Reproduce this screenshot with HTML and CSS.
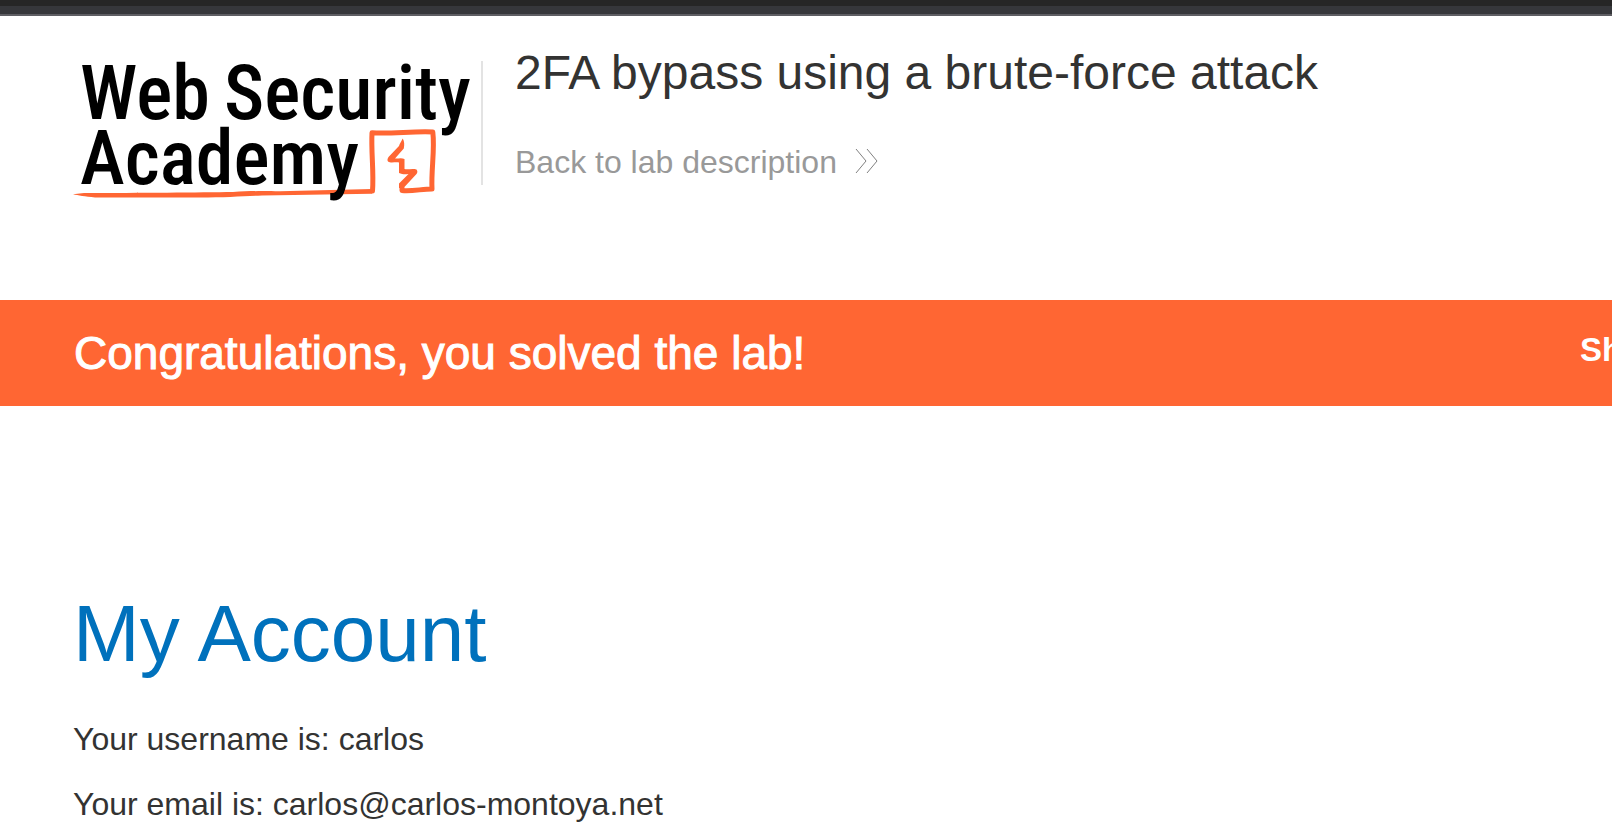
FILE: index.html
```html
<!DOCTYPE html>
<html lang="en">
<head>
<meta charset="utf-8">
<title>2FA bypass using a brute-force attack</title>
<link rel="stylesheet" href="styles.css">
</head>
<body>
<div class="chrome"></div>
<header class="header">
  <svg class="logo" viewBox="72 58 400 144" role="img" aria-label="Web Security Academy">
    <path class="ink-fill" d="M73 194.300L84 193C140 193 200 192.500 233 192C250 191 262 190.800 280 191.300L372 189V193.800L262 195.500C245 196 225 197.500 200 197.500H95C85 196.500 78 195.500 73 194.300Z"/>
    <path class="ink" d="M402 188V190.500C412 191.500 422 189 432 189C431 170 435 150 432.800 132C414 131 391 134 372 132.800C371 152 374 172 372.500 191"/>
    <path class="ink-fill" d="M402.700 138.500C404.500 141 404.500 145 403.800 148.500L395 158.500C397 159 401 157.500 404.500 159V169C408 170 412 168 416.500 169.500C417.800 171 417.500 172.500 416.500 174L403.500 188H399V183.500L408.500 174C406 174.500 402 174.500 399 173V162.500C396 161.500 391 163.500 388 161.500C387 160 387.500 158.500 388.500 157L399 146C399.500 144 401.500 141 402.700 138.500Z"/>
    <g class="logo-text">
      <text x="80" y="119">Web</text>
      <text x="224" y="119">Security</text>
      <text x="80" y="184">Academy</text>
    </g>
  </svg>
  <div class="titles">
    <h2 class="title">2FA bypass using a brute-force attack</h2>
    <a class="back" href="#">Back to lab description
      <svg class="chevrons" viewBox="0 0 24 26" aria-hidden="true"><path d="M1 1L11 13L1 25M12 1L22 13L12 25"/></svg>
    </a>
  </div>
</header>
<section class="banner">
  <p class="solved">Congratulations, you solved the lab!</p>
  <span class="share">Sh</span>
</section>
<main class="account">
  <h1 class="heading">My Account</h1>
  <p class="line">Your username is: carlos</p>
  <p class="line">Your email is: carlos@carlos-montoya.net</p>
</main>
</body>
</html>
```

FILE: styles.css
```css
body {
  margin: 0;
  overflow: hidden;
  background: #fff;
  color: #333332;
  font-family: "Liberation Sans", Arial, sans-serif;
  font-size: 32px;
}

.chrome {
  height: 8px;
  background: #36373b;
  border-top: 6px solid #262626;
  border-bottom: 2px solid #5e5e63;
}

.header {
  display: flex;
  align-items: flex-start;
  padding: 42px 74px 98px 72px;
}

.logo {
  flex: none;
  width: 400px;
  height: 144px;
  overflow: visible;
}

.logo-text {
  font-family: "Roboto Condensed", "Liberation Sans Narrow", Roboto, sans-serif;
  font-size: 76px;
  font-weight: 500;
}

.ink-fill {
  fill: #ff6633;
}

.ink {
  fill: none;
  stroke: #ff6633;
  stroke-width: 5;
  stroke-linejoin: round;
  stroke-linecap: round;
}

.titles {
  display: flex;
  flex-direction: column;
  align-items: flex-start;
  gap: 43px;
  height: 124px;
  margin: 3px 0 0 9px;
  padding-left: 32px;
  border-left: 2px solid #e3e3e3;
}

.title {
  margin: -16px 0 0;
  font-size: 48px;
  font-weight: 400;
  line-height: 56px;
}

.back {
  display: flex;
  align-items: center;
  gap: 18px;
  color: #999;
  line-height: 36px;
  text-decoration: none;
}

.chevrons {
  width: 24px;
  height: 26px;
  margin-bottom: 2px;
  fill: none;
  stroke: #808080;
  stroke-width: 1;
}

.banner {
  display: flex;
  justify-content: space-between;
  align-items: flex-start;
  padding: 25px 0 25px 74px;
  overflow: hidden;
  background: #ff6633;
  color: #fff;
}

.solved {
  margin: 0;
  font-size: 46px;
  line-height: 56px;
  -webkit-text-stroke: 1px #fff;
}

.share {
  width: 32px;
  padding-top: 7px;
  font-size: 33px;
  font-weight: 700;
  line-height: 36px;
  white-space: nowrap;
}

.account {
  padding: 184px 74px 0 73px;
}

.heading {
  margin: 0 0 43px;
  color: #0071bc;
  font-size: 80px;
  font-weight: 400;
  line-height: 88px;
}

.line {
  margin: 0 0 29px;
  line-height: 36px;
}
```
